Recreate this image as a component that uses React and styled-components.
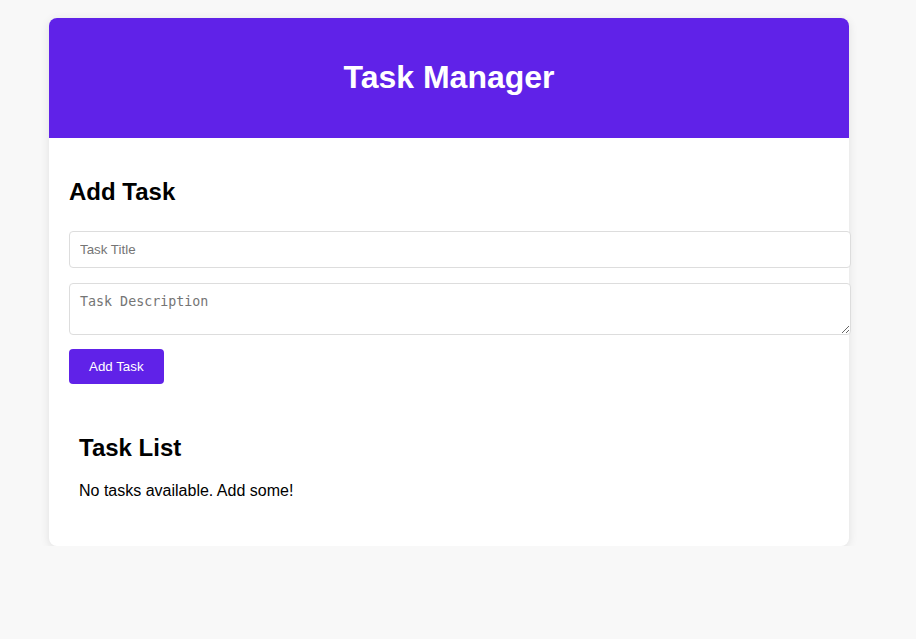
import React, { useState } from 'react'
import styled, { createGlobalStyle } from 'styled-components'

const GlobalStyle = createGlobalStyle`
    body{
        margin:8px;
        background:#f8f8f8;
        font-family:"Liberation Sans", Arial, sans-serif;
    }
`

const Page = styled.div`
    width:898px;
    margin-left:-8px;
    padding-top:10px;
`

const Card = styled.div`
    max-width:800px;
    margin:0 auto;
    background:#fff;
    border-radius:8px;
    box-shadow:0 2px 10px rgba(0,0,0,0.1);
`

const Header = styled.header`
    background:#6022e8;
    color:#fff;
    text-align:center;
    padding:20px;
    border-radius:8px 8px 0 0;

    h1{
        margin:21.44px 0;
        font-size:32px;
    }
`

const Main = styled.main`
    padding:20px;
`

const Heading = styled.h2`
    margin:19.92px 0;
    font-size:24px;
    color:#000;
`

const Form = styled.form`
    padding-top:5px;
    margin-bottom:20px;
`

const Input = styled.input`
    display:block;
    width:100%;
    padding:10px;
    margin:0 0 15px;
    border:1px solid #ddd;
    border-radius:4px;
    font-family:"Liberation Sans", Arial, sans-serif;
    font-size:13.33px;
    &::placeholder{ color:#757575; }
`

const TextArea = styled.textarea`
    display:block;
    width:100%;
    padding:10px;
    margin:0 0 14px;
    border:1px solid #ddd;
    border-radius:4px;
    font-family:"DejaVu Sans Mono", monospace;
    font-size:13.33px;
    height:30px;
    &::placeholder{ color:#757575; }
`

const Button = styled.button`
    background:#6022e8;
    color:#fff;
    border:none;
    border-radius:4px;
    padding:10px 20px;
    font-family:"Liberation Sans", Arial, sans-serif;
    font-size:13.33px;
    cursor:pointer;
`

const TaskList = styled.section`
    padding:10px;
`

const Empty = styled.p`
    margin:16px 0;
    font-size:16px;
    color:#000;
`

const App = () => {
    const [title, setTitle] = useState('')
    const [desc, setDesc] = useState('')
    const [tasks] = useState([])

    return (
        <Page>
            <GlobalStyle/>
            <Card>
                <Header>
                    <h1>Task Manager</h1>
                </Header>
                <Main>
                    <Heading>Add Task</Heading>
                    <Form onSubmit={e=>e.preventDefault()}>
                        <Input
                            placeholder="Task Title"
                            value={title}
                            onChange={e=>setTitle(e.target.value)}
                        />
                        <TextArea
                            placeholder="Task Description"
                            value={desc}
                            onChange={e=>setDesc(e.target.value)}
                        />
                        <Button type="submit">Add Task</Button>
                    </Form>
                    <TaskList>
                        <Heading>Task List</Heading>
                        {tasks.length === 0 && <Empty>No tasks available. Add some!</Empty>}
                    </TaskList>
                </Main>
            </Card>
        </Page>
    )
}

export default App
